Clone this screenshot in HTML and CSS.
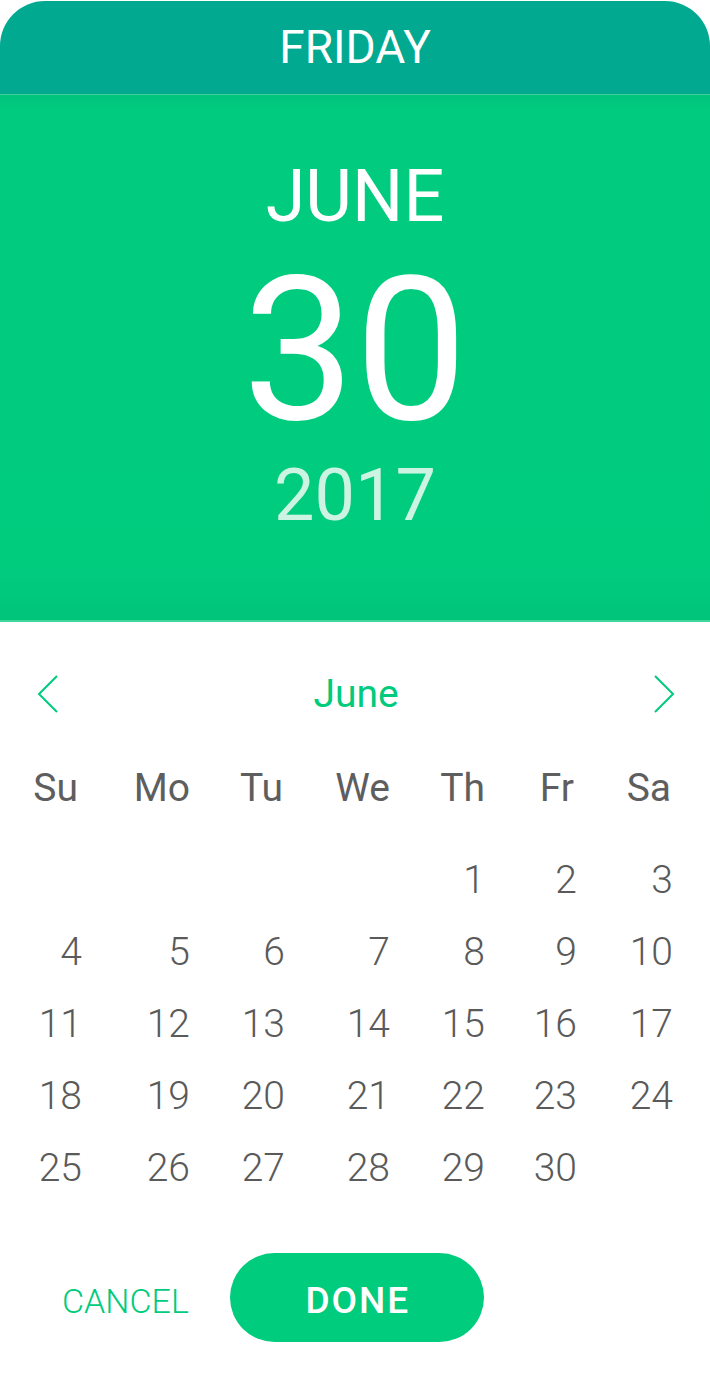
FILE: index.html
```html
<!DOCTYPE html>
<html lang="en">
<head>
<meta charset="utf-8">
<title>Date picker</title>
<link rel="stylesheet" href="styles.css">
</head>
<body>
<div class="picker">
  <div class="dayname">FRIDAY</div>
  <div class="hero">
    <div class="hero-month">JUNE</div>
    <div class="hero-day">30</div>
    <div class="hero-year">2017</div>
  </div>
  <div class="nav">
    <svg class="chev" width="22" height="40" viewBox="0 0 22 40"><polyline points="20,2 2,20 20,38" fill="none" stroke="#00cb7d" stroke-width="2"/></svg>
    <div class="nav-month">June</div>
    <svg class="chev" width="22" height="40" viewBox="0 0 22 40"><polyline points="2,2 20,20 2,38" fill="none" stroke="#00cb7d" stroke-width="2"/></svg>
  </div>
  <div class="grid weekdays">
    <span>Su</span><span>Mo</span><span>Tu</span><span>We</span><span>Th</span><span>Fr</span><span>Sa</span>
  </div>
  <div class="grid days">
    <span></span><span></span><span></span><span></span><span>1</span><span>2</span><span>3</span>
    <span>4</span><span>5</span><span>6</span><span>7</span><span>8</span><span>9</span><span>10</span>
    <span>11</span><span>12</span><span>13</span><span>14</span><span>15</span><span>16</span><span>17</span>
    <span>18</span><span>19</span><span>20</span><span>21</span><span>22</span><span>23</span><span>24</span>
    <span>25</span><span>26</span><span>27</span><span>28</span><span>29</span><span>30</span><span></span>
  </div>
  <div class="actions">
    <button class="btn-cancel">CANCEL</button>
    <button class="btn-done">DONE</button>
  </div>
</div>
</body>
</html>
```

FILE: styles.css
```css
html, body {
  margin: 0;
  padding: 0;
  background: #ffffff;
}
body {
  font-family: Roboto, "Liberation Sans", sans-serif;
  padding-top: 1px;
}
.picker {
  width: 710px;
}
.dayname {
  height: 93px;
  background: #02a991;
  border-radius: 45px 45px 0 0;
  color: #ffffff;
  font-size: 46px;
  line-height: 92px;
  text-align: center;
  font-weight: 400;
}
.hero {
  height: 525px;
  border-top: 1px solid #3ccf9c;
  border-bottom: 2px solid #3fd79c;
  background: linear-gradient(to bottom, #00c47c 0px, #00cb7e 14px, #00cc7e 470px, #00c47a 525px);
  color: #ffffff;
  text-align: center;
  display: flex;
  flex-direction: column;
  align-items: center;
}
.hero-month {
  font-size: 72px;
  line-height: 72px;
  margin-top: 66px;
}
.hero-day {
  font-size: 200px;
  line-height: 170px;
  margin-top: 33px;
}
.hero-year {
  font-size: 72px;
  line-height: 72px;
  margin-top: 24px;
  color: #cdf3e2;
}
.nav {
  display: flex;
  align-items: center;
  justify-content: space-between;
  height: 40px;
  margin-top: 52px;
  padding: 0 35px 0 37px;
}
.chev {
  display: block;
}
.nav-month {
  font-size: 39px;
  line-height: 40px;
  color: #00cb7d;
}
.grid {
  display: grid;
  grid-template-columns: 82px 108px 95px 105px 95px 92px 96px;
}
.grid span {
  text-align: right;
}
.weekdays {
  margin-top: 49px;
  font-size: 39px;
  line-height: 50px;
  color: #5e5e5e;
  font-weight: 400;
}
.weekdays span:nth-child(1) { padding-right: 4px; }
.weekdays span:nth-child(3) { padding-right: 2px; }
.weekdays span:nth-child(6) { padding-right: 3px; }
.weekdays span:nth-child(7) { padding-right: 2px; }
.days {
  margin-top: 31px;
  font-size: 39px;
  line-height: 72px;
  font-weight: 300;
  color: #5a5a5a;
}
.actions {
  display: flex;
  align-items: center;
  margin-top: 49px;
  padding-left: 62px;
  gap: 41px;
}
.btn-cancel {
  border: none;
  background: none;
  padding: 0;
  font-family: Roboto, "Liberation Sans", sans-serif;
  font-size: 34px;
  font-weight: 300;
  color: #00cb7d;
  line-height: 40px;
  margin-top: 6px;
}
.btn-done {
  border: none;
  width: 254px;
  height: 89px;
  border-radius: 45px;
  background: #00cc7e;
  color: #ffffff;
  font-family: Roboto, "Liberation Sans", sans-serif;
  font-size: 37px;
  font-weight: 500;
  letter-spacing: 2px;
  padding: 5px 0 0 2px;
}
```
